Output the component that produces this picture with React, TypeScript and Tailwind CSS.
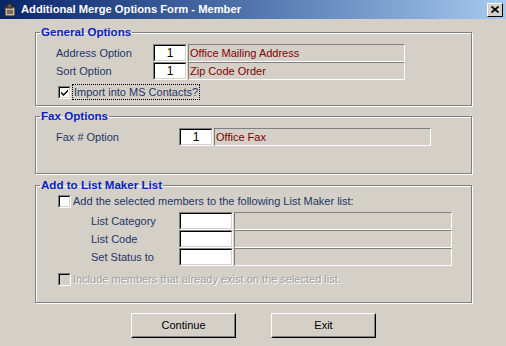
import type { ReactNode } from "react";

const LABEL = "text-[#1f3566]";

function Sunken({ className = "", children }: { className?: string; children?: ReactNode }) {
  // classic win32 edit box: grey/black top-left, white bottom-right
  return (
    <div className={`border border-t-[#808080] border-l-[#808080] border-b-white border-r-white ${className}`}>
      <div className="h-full w-full border border-t-black border-l-black border-b-[#d4d0c8] border-r-[#d4d0c8] bg-white flex items-center justify-center">
        {children}
      </div>
    </div>
  );
}

function Readonly({ className = "", children }: { className?: string; children?: ReactNode }) {
  return (
    <div className={`border border-t-[#808080] border-l-[#808080] border-b-white border-r-white flex items-center pl-[1px] text-[#800000] ${className}`}>
      {children}
    </div>
  );
}

function Check({ checked, disabled }: { checked?: boolean; disabled?: boolean }) {
  return (
    <div className="h-[13px] w-[13px] shrink-0 border border-t-[#808080] border-l-[#808080] border-b-white border-r-white">
      <div className={`h-full w-full border border-t-black border-l-black border-b-[#d4d0c8] border-r-[#d4d0c8] ${disabled ? "bg-[#d4d0c8]" : "bg-white"}`}>
        {checked && (
          <svg viewBox="0 0 9 9" className="h-[9px] w-[9px]">
            <path d="M1 3.5 L3.5 6 L8 1.5 L8 3.5 L3.5 8 L1 5.5 Z" fill="black" />
          </svg>
        )}
      </div>
    </div>
  );
}

function Group({ title, className = "", children }: { title: string; className?: string; children: ReactNode }) {
  return (
    <fieldset
      className={`mx-[35px] w-[437px] border border-[#808080] shadow-[inset_1px_1px_0_white,1px_1px_0_white] p-0 ${className}`}
    >
      <legend className="ml-[4px] px-[1px] text-[11.6px] leading-[14px] font-bold text-[#0a1fc4]">{title}</legend>
      {children}
    </fieldset>
  );
}

function Button({ children }: { children: ReactNode }) {
  return (
    <div className="h-[25px] w-[105px] border border-t-white border-l-white border-b-black border-r-black">
      <div className="h-full w-full border border-t-[#d4d0c8] border-l-[#d4d0c8] border-b-[#808080] border-r-[#808080] flex items-center justify-center text-[11px] text-black">
        {children}
      </div>
    </div>
  );
}

export default function App() {
  return (
    <div className="w-[506px] h-[346px] bg-[#d4d0c8] overflow-hidden" style={{ fontFamily: '"Liberation Sans", Arial, sans-serif' }}>
      {/* title bar */}
      <div className="h-[19px] flex items-center bg-gradient-to-r from-[#0a246a] to-[#a6caf0] pl-[3px] pr-[3px]">
        <svg viewBox="0 0 14 14" className="h-[14px] w-[14px] shrink-0">
          <rect x="2" y="4" width="10" height="9" fill="#c8b89a" stroke="#222" strokeWidth="1" />
          <rect x="4" y="1" width="5" height="4" fill="#6a5a40" stroke="#222" strokeWidth="1" />
          <path d="M4 8 h6 M4 10 h6" stroke="#222" strokeWidth="1" />
        </svg>
        <span className="ml-[4px] text-[11.2px] font-bold text-white">Additional Merge Options Form - Member</span>
        <div className="ml-auto h-[14px] w-[16px] border border-t-white border-l-white border-b-black border-r-black bg-[#d4d0c8] flex items-center justify-center">
          <svg viewBox="0 0 8 7" className="h-[7px] w-[8px]">
            <path d="M0.5 0.5 L7.5 6.5 M7.5 0.5 L0.5 6.5" stroke="black" strokeWidth="1.6" />
          </svg>
        </div>
      </div>

      <Group title="General Options" className="mt-[6px] h-[81px]">
        <div className={`text-[11px] ${LABEL}`}>
          <div className="mt-[5px] flex h-[18px] items-center">
            <span className="ml-[20px] w-[97px]">Address Option</span>
            <Sunken className="h-[18px] w-[34px]"><span className="text-black text-[12px]">1</span></Sunken>
            <Readonly className="ml-[1px] h-[18px] w-[217px]">Office Mailing Address</Readonly>
          </div>
          <div className="flex h-[18px] items-center">
            <span className="ml-[20px] w-[97px]">Sort Option</span>
            <Sunken className="h-[18px] w-[34px]"><span className="text-black text-[12px]">1</span></Sunken>
            <Readonly className="ml-[1px] h-[18px] w-[217px]">Zip Code Order</Readonly>
          </div>
          <div className="mt-[4px] flex items-center ml-[22px]">
            <Check checked />
            <span className="ml-[1px] px-[1px] border border-dotted border-black leading-[14px]">Import into MS Contacts?</span>
          </div>
        </div>
      </Group>

      <Group title="Fax Options" className="mt-[3px] h-[65px]">
        <div className={`text-[11px] ${LABEL}`}>
          <div className="mt-[5px] flex h-[18px] items-center">
            <span className="ml-[20px] w-[123px]">Fax # Option</span>
            <Sunken className="h-[18px] w-[34px]"><span className="text-black text-[12px]">1</span></Sunken>
            <Readonly className="ml-[1px] h-[18px] w-[217px]">Office Fax</Readonly>
          </div>
        </div>
      </Group>

      <Group title="Add to List Maker List" className="mt-[4px] h-[125px]">
        <div className={`text-[11px] ${LABEL}`}>
          <div className="mt-[2px] flex items-center ml-[22px] h-[14px]">
            <Check />
            <span className="ml-[2px]">Add the selected members to the following List Maker list:</span>
          </div>
          {["List Category", "List Code", "Set Status to"].map((l, i) => (
            <div key={l} className={`flex h-[18px] items-center ${i === 0 ? "mt-[4px]" : ""}`}>
              <span className="ml-[55px] w-[88px]">{l}</span>
              <Sunken className="h-[18px] w-[54px]" />
              <Readonly className="ml-[1px] h-[18px] w-[218px]" />
            </div>
          ))}
          <div className="mt-[6px] flex items-center ml-[22px] h-[14px]">
            <Check disabled />
            <span className="ml-[2px] text-[#a0a0a0] [text-shadow:1px_1px_0_white]">Include members that already exist on the selected list.</span>
          </div>
        </div>
      </Group>

      <div className="mt-[10px] flex">
        <div className="ml-[131px]"><Button>Continue</Button></div>
        <div className="ml-[35px]"><Button>Exit</Button></div>
      </div>
    </div>
  );
}
